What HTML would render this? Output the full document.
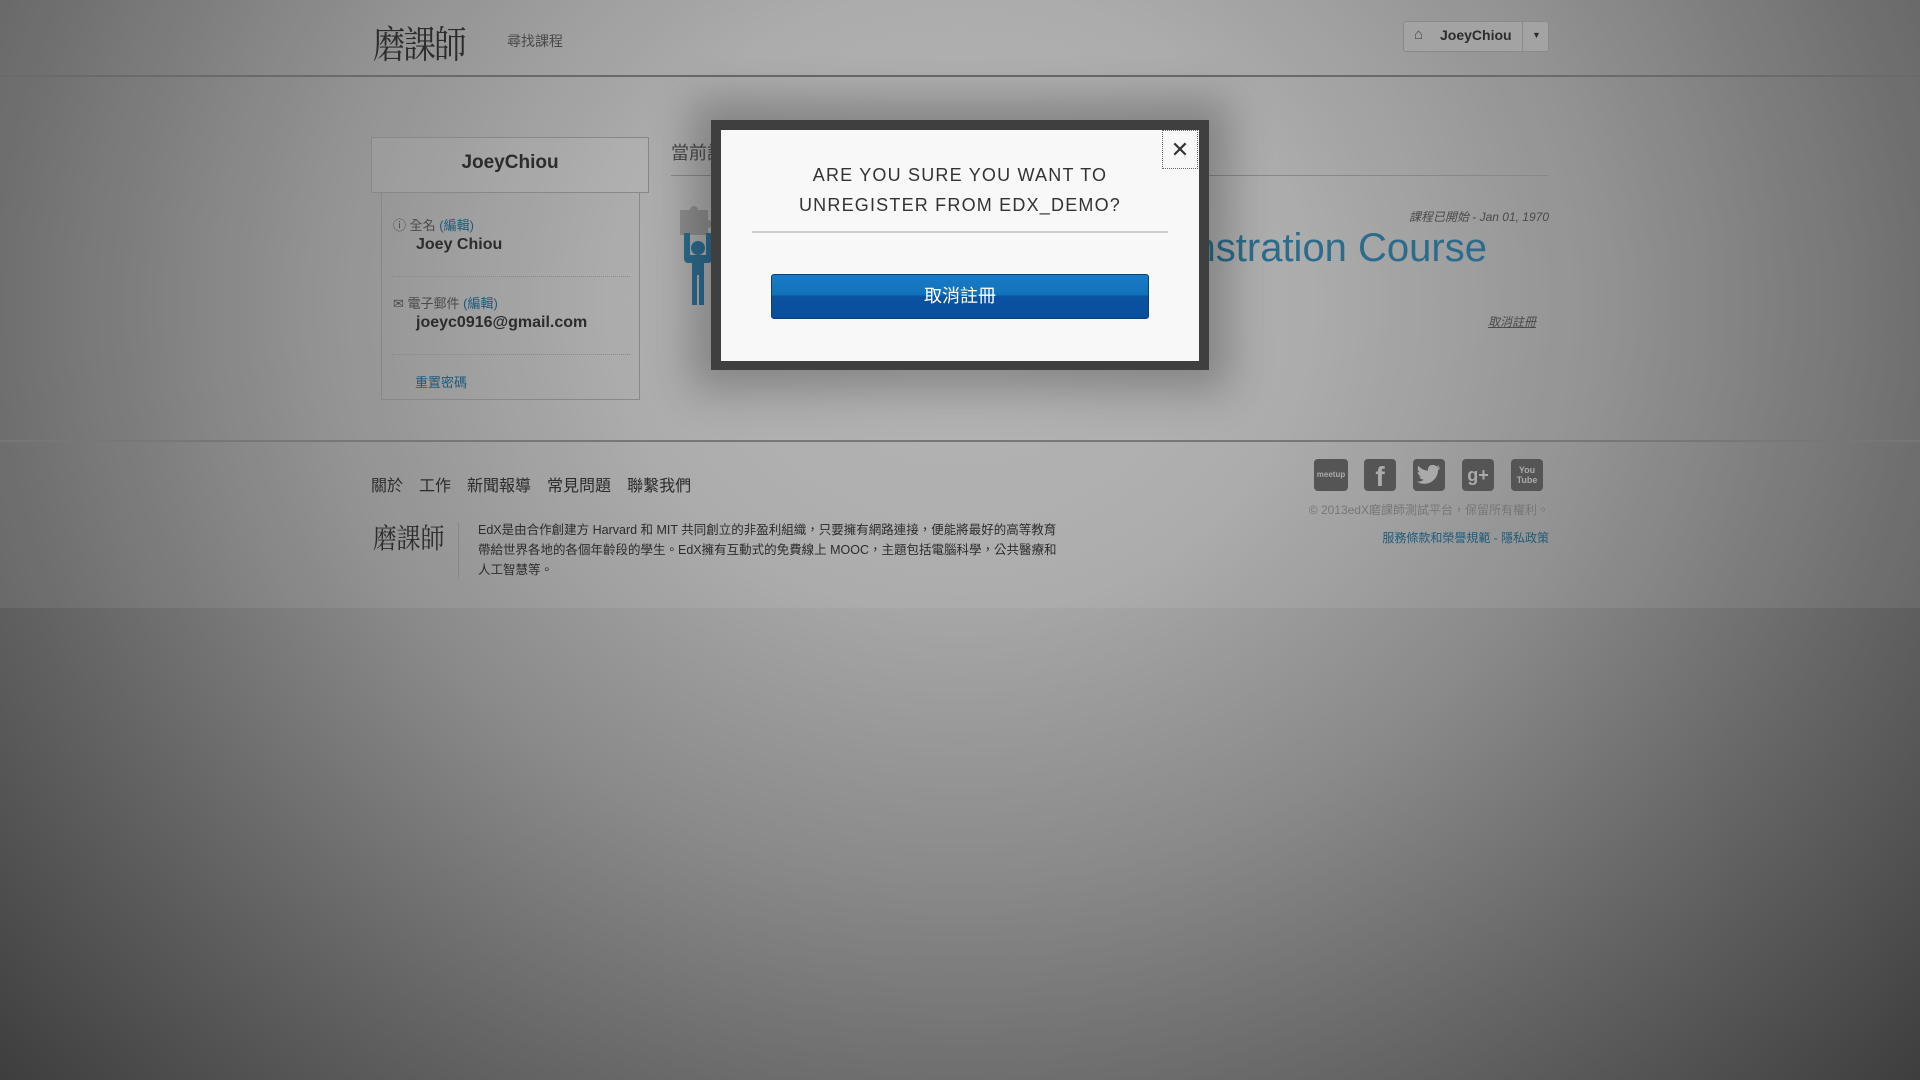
<!DOCTYPE html>
<html><head><meta charset="utf-8"><style>
*{margin:0;padding:0;box-sizing:border-box}
body{width:1920px;height:1080px;overflow:hidden;position:relative;font-family:"Liberation Sans","Noto Sans CJK TC",sans-serif;
background:radial-gradient(ellipse 1300px 1150px at 50% 28%,#b2b2b2 0,#a6a6a6 350px,#8a8a8a 650px,#666 950px,#3e3e3e 1300px);}
.a{position:absolute}
.top{left:0;top:0;width:1920px;height:608px;background:rgba(255,255,255,0.07)}
.hdr{left:0;top:0;width:1920px;height:77px;border-bottom:2px solid #6a6a6a}
.t{color:#2c2c2c}
.gray{color:#4a4a4a}
.blue{color:#1f5a7a}
.fl span{margin-right:16px}
</style></head><body>
<div class="a top"></div>
<div class="a hdr"></div>
<div class="a t" style="left:373px;top:14px;font-size:38px;font-family:'Noto Serif CJK SC',serif;letter-spacing:-2px;transform:scaleX(0.85);transform-origin:left">磨課師</div>
<div class="a gray" style="left:507px;top:31px;font-size:14px">尋找課程</div>
<div class="a" style="left:1403px;top:21px;width:146px;height:31px;border:1px solid #8a8a8a;border-radius:3px;background:#a3a3a3"></div>
<div class="a" style="left:1522px;top:22px;width:1px;height:29px;background:#8a8a8a"></div>
<div class="a gray" style="left:1414px;top:26px;font-size:15px">⌂</div>
<div class="a t" style="left:1440px;top:27px;font-size:14px;font-weight:bold">JoeyChiou</div>
<div class="a t" style="left:1532px;top:30px;font-size:9px">▼</div>

<div class="a" style="left:371px;top:137px;width:278px;height:56px;border:1px solid #888;background:rgba(255,255,255,0.06)"></div>
<div class="a t" style="left:371px;top:152px;width:278px;text-align:center;font-size:19px;font-weight:bold">JoeyChiou</div>
<div class="a" style="left:381px;top:192px;width:259px;height:208px;border:1px solid #888;border-top:none"></div>
<div class="a gray" style="left:393px;top:215px;font-size:13px">ⓘ 全名 <span class="blue">(編輯)</span></div>
<div class="a t" style="left:416px;top:236px;font-size:16px;font-weight:bold">Joey Chiou</div>
<div class="a" style="left:392px;top:276px;width:238px;border-top:1px dotted #888"></div>
<div class="a gray" style="left:393px;top:293px;font-size:13px">✉ 電子郵件 <span class="blue">(編輯)</span></div>
<div class="a t" style="left:416px;top:314px;font-size:16px;font-weight:bold">joeyc0916@gmail.com</div>
<div class="a" style="left:392px;top:354px;width:238px;border-top:1px dotted #888"></div>
<div class="a blue" style="left:415px;top:372px;font-size:13px">重置密碼</div>

<div class="a gray" style="left:671px;top:139px;font-size:18px">當前課程</div>
<div class="a" style="left:671px;top:175px;width:878px;height:1px;background:#888"></div>
<div class="a gray" style="right:371px;top:208px;font-size:12px;font-style:italic">課程已開始 - Jan 01, 1970</div>
<svg class="a" style="left:670px;top:205px" width="50" height="105" viewBox="0 0 50 105">
<path d="M10 5h10a4 4 0 0 1 8 0h10v10a4 4 0 0 1 0 8v7H10z" fill="#8e8e8e"/>
<path d="M14 28v26a4 4 0 0 0 4 4h4v42h5V70h2v30h5V58h4a4 4 0 0 0 4-4V28h-6v22H20V28z" fill="#2d6d8f"/>
<circle cx="28" cy="43" r="7" fill="#2d6d8f"/>
</svg>
<div class="a" style="right:433px;top:226px;font-size:40px;color:#2b6c8c">Demonstration Course</div>
<div class="a gray" style="left:1488px;top:313px;font-size:12px;font-style:italic;text-decoration:underline">取消註冊</div>

<div class="a" style="left:0;top:440px;width:1920px;height:2px;background:#777"></div>
<div class="a t fl" style="left:371px;top:472px;font-size:16px"><span>關於</span><span>工作</span><span>新聞報導</span><span>常見問題</span><span>聯繫我們</span></div>
<div class="a t" style="left:373px;top:517px;font-size:28px;font-family:'Noto Serif CJK SC',serif;transform:scaleX(0.85);transform-origin:left">磨課師</div>
<div class="a" style="left:458px;top:522px;width:1px;height:56px;background:#888"></div>
<div class="a t" style="left:478px;top:520px;width:580px;font-size:12.5px;line-height:20px">EdX是由合作創建方 Harvard 和 MIT 共同創立的非盈利組織，只要擁有網路連接，便能將最好的高等教育帶給世界各地的各個年齡段的學生。EdX擁有互動式的免費線上 MOOC，主題包括電腦科學，公共醫療和人工智慧等。</div>
<div class="a" style="left:1314px;top:459px;width:34px;height:32px;background:#555;border-radius:4px;color:#aaa;font:bold 8px 'Liberation Sans';text-align:center;line-height:32px">meetup</div>
<div class="a" style="left:1364px;top:459px;width:32px;height:32px;background:#555;border-radius:4px;color:#aaa;font:bold 28px 'Liberation Sans';text-align:center;line-height:36px">f</div>
<div class="a" style="left:1413px;top:459px;width:32px;height:32px;background:#555;border-radius:4px"></div>
<svg class="a" style="left:1417px;top:465px" width="24" height="20" viewBox="0 0 24 20"><path d="M23 2c-1 .5-2 .7-3 .8 1-.6 2-1.6 2.2-2.6-1 .6-2 1-3 1.2A4.8 4.8 0 0 0 11 5.7 13.6 13.6 0 0 1 1.3 .8a4.8 4.8 0 0 0 1.5 6.4c-.8 0-1.6-.3-2.2-.6 0 2.3 1.7 4.3 3.900 4.700-.7.2-1.500.2-2.200.1.6 1.900 2.400 3.300 4.500 3.300A9.700 9.700 0 0 1 0 16.700 13.700 13.700 0 0 0 21 5.200c1-.7 1.600-1.500 2-3.200z" fill="#aaa"/></svg>
<div class="a" style="left:1462px;top:459px;width:32px;height:32px;background:#555;border-radius:4px;color:#aaa;font:bold 18px 'Liberation Sans';text-align:center;line-height:32px">g+</div>
<div class="a" style="left:1511px;top:459px;width:32px;height:32px;background:#555;border-radius:4px;color:#aaa;font:bold 9px 'Liberation Sans';text-align:center;padding-top:6px">You<br>Tube</div>
<div class="a" style="left:1300px;top:501px;width:249px;text-align:right;font-size:12px;color:#777">© 2013edX磨課師測試平台，保留所有權利。</div>
<div class="a blue" style="left:1300px;top:529px;width:249px;text-align:right;font-size:12px">服務條款和榮譽規範 - 隱私政策</div>

<div class="a" style="left:711px;top:120px;width:498px;height:250px;background:#3f3f3f;box-shadow:0 0 40px 20px rgba(0,0,0,0.25)"></div>
<div class="a" style="left:721px;top:130px;width:478px;height:231px;background:#f8f8f8"></div>
<div class="a" style="left:1162px;top:130px;width:36px;height:39px;border:1px dotted #666;text-align:center;font-size:22px;line-height:37px;color:#333">✕</div>
<div class="a" style="left:721px;top:160px;width:478px;text-align:center;font-size:18px;line-height:30px;letter-spacing:1.2px;color:#333">ARE YOU SURE YOU WANT TO<br>UNREGISTER FROM EDX_DEMO?</div>
<div class="a" style="left:752px;top:231px;width:416px;height:2px;background:#ccc"></div>
<div class="a" style="left:771px;top:274px;width:378px;height:45px;border-radius:3px;border:1px solid #0b3f7a;background:linear-gradient(#1a7ac5 0,#1273bd 45%,#0a52a0 50%,#094e9c 100%);color:#fff;text-align:center;font-size:18px;line-height:43px">取消註冊</div>
</body></html>
